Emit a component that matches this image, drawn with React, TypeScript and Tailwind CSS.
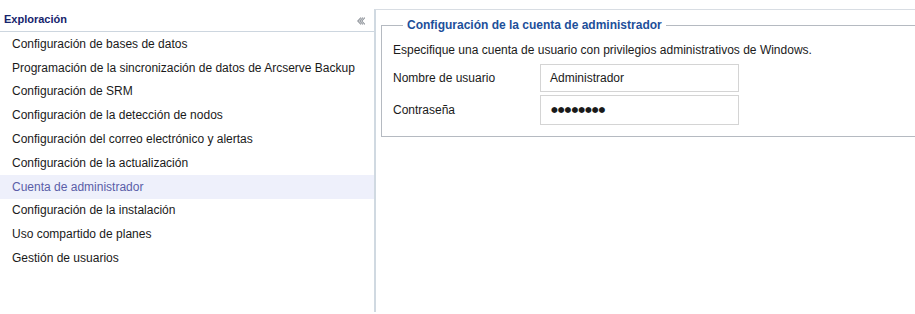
import React from "react";

const items = [
  "Configuración de bases de datos",
  "Programación de la sincronización de datos de Arcserve Backup",
  "Configuración de SRM",
  "Configuración de la detección de nodos",
  "Configuración del correo electrónico y alertas",
  "Configuración de la actualización",
  "Cuenta de administrador",
  "Configuración de la instalación",
  "Uso compartido de planes",
  "Gestión de usuarios",
];

function CollapseIcon() {
  return (
    <svg width="8" height="8" viewBox="0 0 8 8" className="text-[#8a8f96]">
      <path d="M4 0.5 L0.8 4 L4 7.5" fill="none" stroke="currentColor" strokeWidth="1.1" />
      <path d="M6 0.5 L2.8 4 L6 7.5" fill="none" stroke="currentColor" strokeWidth="1.1" />
      <path d="M8 0.5 L4.8 4 L8 7.5" fill="none" stroke="currentColor" strokeWidth="1.1" />
    </svg>
  );
}

export default function App() {
  const selected = "Cuenta de administrador";

  return (
    <div className="w-[915px] h-[314px] overflow-hidden bg-white flex font-['Liberation_Sans',Arial,sans-serif] text-[12px] text-[#1a1a1a]">
      {/* Panel izquierdo */}
      <div className="w-[374px] shrink-0">
        <div className="h-[32px] border-b border-[#cdd6df] flex items-end justify-between pl-[4px] pr-[9px] pb-[5px]">
          <span className="text-[11px] leading-[13px] font-bold text-[#16246c]">Exploración</span>
          <span className="mb-[1px]">
            <CollapseIcon />
          </span>
        </div>
        <ul>
          {items.map((item) => (
            <li
              key={item}
              className={`h-[23.8px] flex items-center pl-[12px] ${
                item === selected ? "bg-[#eef0fb] text-[#5a5ea8]" : ""
              }`}
            >
              {item}
            </li>
          ))}
        </ul>
      </div>

      {/* Panel derecho */}
      <div className="flex-1 mt-[9px] mb-[2px] border-l-2 border-t border-l-[#d0d9e1] border-t-[#d8dde3] pl-[5px]">
        <fieldset className="mt-[8px] w-[560px] border border-[#b5bac1] pl-[11px] pb-[11px]">
          <legend className="ml-[10px] px-[4px] text-[12px] leading-[14px] font-bold text-[#1d4f9a]">
            Configuración de la cuenta de administrador
          </legend>
          <p className="mt-[11px] leading-[14px]">
            Especifique una cuenta de usuario con privilegios administrativos de Windows.
          </p>
          <div className="mt-[7px] flex flex-col gap-[3px]">
            <div className="flex items-center">
              <span className="w-[147px]">Nombre de usuario</span>
              <div className="w-[199px] h-[28px] border border-[#d4d4d4] flex items-center pl-[9px]">
                Administrador
              </div>
            </div>
            <div className="flex items-center">
              <span className="w-[147px]">Contraseña</span>
              <div className="w-[199px] h-[30px] border border-[#d4d4d4] flex items-center pl-[10px]">
                <span className="font-['DejaVu_Sans',sans-serif] text-[7.8px]">●●●●●●●●</span>
              </div>
            </div>
          </div>
        </fieldset>
      </div>
    </div>
  );
}
